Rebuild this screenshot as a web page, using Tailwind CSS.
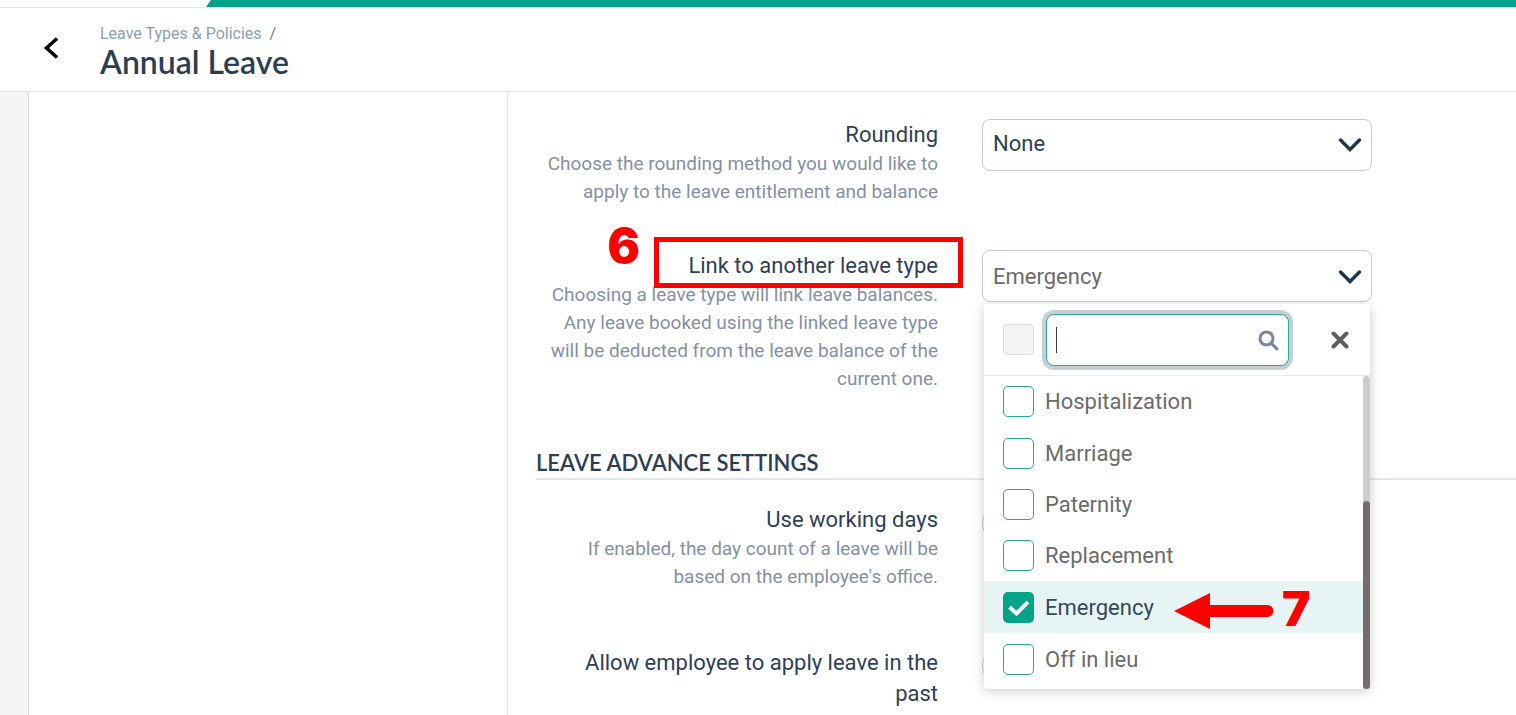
<!DOCTYPE html>
<html lang="en">
<head>
  <meta charset="UTF-8">
  <meta name="viewport" content="width=device-width, initial-scale=1.0">
  <title>Annual Leave - Leave Types &amp; Policies</title>
  <script src="https://cdn.jsdelivr.net/npm/@tailwindcss/browser@4"></script>
</head>
<body class="min-h-screen flex flex-col bg-white font-['Roboto',sans-serif] text-[#2e3f57]">

  <!-- Top bar -->
  <div class="h-2 border-b border-[#e3e5e8] flex">
    <div class="w-[206px]"></div>
    <div class="flex-1 bg-[#02a386] [clip-path:polygon(5px_0,100%_0,100%_100%,0_100%)]"></div>
  </div>

  <!-- Header -->
  <header class="h-[84px] shrink-0 flex items-center border-b border-[#e0e3e6] bg-white">
    <button type="button" aria-label="Back" class="w-[100px] h-full pl-[43px] pb-1 flex items-center">
      <svg width="16" height="24" viewBox="0 0 16 24" fill="none" stroke="#000" stroke-width="3.500"><path d="M14 2.500L3.500 12L14 21.500"/></svg>
    </button>
    <div class="pt-1">
      <nav class="text-base leading-5 text-[#6b7d8f]"><a href="#" class="text-[#8aa0ae]">Leave Types &amp; Policies</a>&nbsp; /</nav>
      <h1 class="font-['Lato',sans-serif] font-semibold text-[32px] leading-9 text-[#2c3e55]">Annual Leave</h1>
    </div>
  </header>

  <!-- Main -->
  <main class="flex-1 flex">
    <div class="w-[29px] shrink-0 bg-[#f4f5f7] border-r border-[#d9dcdf]"></div>
    <aside class="w-[479px] shrink-0 border-r border-[#e0e4ea]"></aside>

    <form class="flex-1 pt-[27px] pl-7">
      <!-- Rounding -->
      <div class="flex gap-11">
        <div class="w-[402px] text-right">
          <label for="rounding" class="block text-[22px] leading-[31px]">Rounding</label>
          <p class="text-[19px] leading-7 text-[#8490a4]">Choose the rounding method you would like to apply to the leave entitlement and balance</p>
        </div>
        <div class="relative w-[390px] h-[52px]">
          <select id="rounding" class="appearance-none w-full h-full pl-[10px] pb-1 border border-[#c3cad6] rounded-lg bg-white text-[22px]">
            <option>None</option>
          </select>
          <svg class="absolute right-[10px] top-[18px] pointer-events-none" width="24" height="16" viewBox="0 0 24 16" fill="none" stroke="#20364f" stroke-width="3.500" stroke-linecap="round"><path d="M2.500 3L12 12.500L21.500 3"/></svg>
        </div>
      </div>

      <!-- Linked leave type -->
      <div class="mt-11 flex gap-11">
        <div class="relative w-[402px] text-right">
          <label for="linked" class="block text-[22px] leading-[31px]">Link to another leave type</label>
          <p class="text-[19px] leading-7 text-[#8490a4]">Choosing a leave type will link leave balances. Any leave booked using the linked leave type will be deducted from the leave balance of the current one.</p>
          <!-- Step 6 marker -->
          <div class="absolute -right-[25px] -top-[13px] w-[309px] h-[51px] border-5 border-[#ff0000]"></div>
          <span class="absolute right-[298px] -top-[30px] font-['Inter',sans-serif] font-black text-5xl leading-[52px] text-[#ff0000]">6</span>
        </div>
        <div class="relative w-[390px] h-[52px]">
          <select id="linked" class="appearance-none w-full h-full pl-[10px] border border-[#c3cad6] rounded-lg bg-white text-[22px] text-[#6b6b6b]">
            <option>Emergency</option>
          </select>
          <svg class="absolute right-[10px] top-[19px] pointer-events-none" width="24" height="16" viewBox="0 0 24 16" fill="none" stroke="#20364f" stroke-width="3.500" stroke-linecap="round"><path d="M2.500 3L12 12.500L21.500 3"/></svg>

          <!-- Dropdown menu -->
          <div class="absolute z-10 left-[2px] top-[54px] w-[386px] bg-white rounded-b shadow-[0_2px_12px_rgba(0,0,0,0.2)]">
            <div class="h-[72px] flex items-center pl-[19px] border-b border-[#e9e9e9]">
              <input type="checkbox" aria-label="Select all" disabled class="appearance-none size-[31px] rounded-sm border border-[#dedede] bg-[#f3f3f3]">
              <div class="relative ml-3 w-[243px] h-[52px]">
                <input type="text" aria-label="Search" class="w-full h-full pl-[10px] pr-10 rounded-lg border border-[#26ab92] ring-4 ring-[#c6cfd8] bg-white text-[22px] outline-none">
                <span class="absolute left-[10px] top-[13px] w-px h-[26px] bg-[#2e3f57]"></span>
                <svg class="absolute right-[10px] top-4" width="21" height="21" viewBox="0 0 21 21" fill="none" stroke="#75869e" stroke-width="3"><circle cx="8.500" cy="8.500" r="6.500"/><path d="M13.500 13.500L19 19" stroke-linecap="round"/></svg>
              </div>
              <button type="button" aria-label="Clear" class="ml-[42px]">
                <svg width="18" height="18" viewBox="0 0 18 18" fill="none" stroke="#5f5f5f" stroke-width="4" stroke-linecap="round"><path d="M2.500 2.500L15.500 15.500M15.500 2.500L2.500 15.500"/></svg>
              </button>
            </div>
            <div class="flex">
              <ul class="flex-1 pb-1 text-[22px] text-[#6b6b6b]">
                <li><label class="h-[51px] pl-[19px] flex items-center gap-[11px]"><input type="checkbox" class="appearance-none size-[31px] rounded-[5px] border border-[#26ab92]">Hospitalization</label></li>
                <li><label class="h-[52px] pl-[19px] flex items-center gap-[11px]"><input type="checkbox" class="appearance-none size-[31px] rounded-[5px] border border-[#26ab92]">Marriage</label></li>
                <li><label class="h-[51px] pl-[19px] flex items-center gap-[11px]"><input type="checkbox" class="appearance-none size-[31px] rounded-[5px] border border-[#26ab92]">Paternity</label></li>
                <li><label class="h-[51px] pl-[19px] flex items-center gap-[11px]"><input type="checkbox" class="appearance-none size-[31px] rounded-[5px] border border-[#26ab92]">Replacement</label></li>
                <li class="relative bg-[#e6f5f4] text-[#36475f]">
                  <label class="h-[52px] pl-[19px] flex items-center gap-[11px]"><input type="checkbox" checked class="appearance-none size-[31px] rounded-[5px] bg-[#02a386]">Emergency</label>
                  <svg class="absolute left-[23px] top-[17px] pointer-events-none" width="24" height="20" viewBox="0 0 24 20" fill="none" stroke="#fff" stroke-width="4"><path d="M2.500 9L9.500 15.500L21 4"/></svg>
                  <!-- Step 7 marker -->
                  <svg class="absolute left-[190px] top-3" width="100" height="36" viewBox="0 0 100 36" fill="#ff0000"><path d="M0 18L36 0V12H93.500A6 6 0 0 1 93.500 24H36V36Z"/></svg>
                  <span class="absolute left-[298px] top-[2px] font-['Inter',sans-serif] font-black text-5xl leading-[52px] text-[#ff0000]">7</span>
                </li>
                <li><label class="h-[52px] pl-[19px] flex items-center gap-[11px]"><input type="checkbox" class="appearance-none size-[31px] rounded-[5px] border border-[#26ab92]">Off in lieu</label></li>
              </ul>
              <!-- Scrollbar -->
              <div class="w-[7px] flex flex-col justify-end rounded-full bg-[#cdcdcd]">
                <div class="h-3/5 rounded-full bg-[#736d6d]"></div>
              </div>
            </div>
          </div>
        </div>
      </div>

      <h2 class="mt-[54px] border-b-2 border-[#e1e6eb] font-['Lato',sans-serif] font-semibold text-[22px] leading-[31px] text-[#2c3e55]">LEAVE ADVANCE SETTINGS</h2>

      <!-- Working days -->
      <div class="mt-6 flex gap-11">
        <div class="w-[402px] text-right">
          <label for="working-days" class="block text-[22px] leading-[31px]">Use working days</label>
          <p class="text-[19px] leading-7 text-[#8490a4]">If enabled, the day count of a leave will be based on the employee's office.</p>
        </div>
        <input type="checkbox" id="working-days" checked class="appearance-none w-[70px] h-[38px] rounded-full border border-[#9fd8cc] bg-white">
      </div>

      <!-- Leave in the past -->
      <div class="mt-14 flex gap-11">
        <div class="w-[402px] pl-4 text-right">
          <label for="past-leave" class="block text-[22px] leading-[31px]">Allow employee to apply leave in the past</label>
        </div>
        <input type="checkbox" id="past-leave" class="appearance-none w-[70px] h-[38px] rounded-full border border-[#d5d5d5] bg-white">
      </div>
    </form>
  </main>

</body>
</html>
